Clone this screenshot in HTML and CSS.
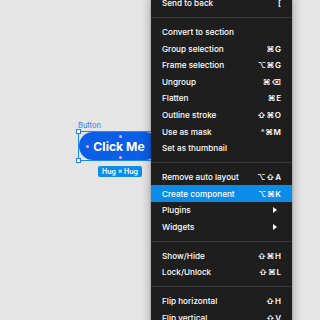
FILE: index.html
```html
<!DOCTYPE html>
<html>
<head>
<meta charset="utf-8">
<link rel="stylesheet" href="styles.css">
</head>
<body>
<div class="canvas">
  <div class="layer-label">Button</div>
  <div class="frame">
    <div class="pill">Click Me</div>
    <span class="handle h-tl"></span>
    <span class="handle h-bl"></span>
    <span class="dot d-left"></span>
    <span class="dot d-top"></span>
    <span class="dot d-bottom"></span>
  </div>
  <div class="badge">Hug × Hug</div>

  <div class="menu">
    <div class="item"><span>Send to back</span><span class="key">[</span></div>
    <div class="sep"></div>
    <div class="item"><span>Convert to section</span></div>
    <div class="item"><span>Group selection</span><span class="key">⌘G</span></div>
    <div class="item"><span>Frame selection</span><span class="key">⌥⌘G</span></div>
    <div class="item"><span>Ungroup</span><span class="key">⌘⌫</span></div>
    <div class="item"><span>Flatten</span><span class="key">⌘E</span></div>
    <div class="item"><span>Outline stroke</span><span class="key">⇧⌘O</span></div>
    <div class="item"><span>Use as mask</span><span class="key">^⌘M</span></div>
    <div class="item"><span>Set as thumbnail</span></div>
    <div class="sep"></div>
    <div class="item"><span>Remove auto layout</span><span class="key">⌥⇧A</span></div>
    <div class="item active"><span>Create component</span><span class="key">⌥⌘K</span></div>
    <div class="item"><span>Plugins</span><svg class="arrow" width="4" height="6" viewBox="0 0 4 6"><path d="M0 0L4 3L0 6Z" fill="#fff"/></svg></div>
    <div class="item"><span>Widgets</span><svg class="arrow" width="4" height="6" viewBox="0 0 4 6"><path d="M0 0L4 3L0 6Z" fill="#fff"/></svg></div>
    <div class="sep"></div>
    <div class="item"><span>Show/Hide</span><span class="key">⇧⌘H</span></div>
    <div class="item"><span>Lock/Unlock</span><span class="key">⇧⌘L</span></div>
    <div class="sep"></div>
    <div class="item"><span>Flip horizontal</span><span class="key">⇧H</span></div>
    <div class="item"><span>Flip vertical</span><span class="key">⇧V</span></div>
  </div>
</div>
</body>
</html>
```
FILE: styles.css
```css
html, body {
  margin: 0;
  padding: 0;
  width: 320px;
  height: 320px;
  overflow: hidden;
  background: #e5e5e5;
}
.canvas {
  position: relative;
  width: 320px;
  height: 320px;
  font-family: Inter, "Noto Sans", sans-serif;
}
.layer-label {
  position: absolute;
  left: 78px;
  top: 121px;
  font-size: 7.5px;
  line-height: 9px;
  color: #2f7de1;
}
.frame {
  position: absolute;
  left: 78px;
  top: 131px;
  width: 82px;
  height: 30px;
  box-sizing: border-box;
  border: 1px solid #1e88f0;
}
.pill {
  height: 28px;
  border-radius: 14px;
  background: #0b5ee6;
  color: #fff;
  font-weight: 700;
  font-size: 12.2px;
  display: flex;
  align-items: center;
  justify-content: center;
}
.handle {
  position: absolute;
  width: 5px;
  height: 5px;
  box-sizing: border-box;
  background: #fff;
  border: 1px solid #1e88f0;
}
.h-tl { left: -3px; top: -3px; }
.h-bl { left: -3px; bottom: -3px; }
.dot {
  position: absolute;
  width: 3px;
  height: 3px;
  border-radius: 50%;
  background: #f0a8f4;
}
.d-left { left: 7px; top: 13px; }
.d-top { left: 40px; top: 3px; }
.d-bottom { left: 40px; top: 24px; }
.badge {
  position: absolute;
  left: 98px;
  top: 166px;
  width: 44px;
  height: 11px;
  border-radius: 2px;
  background: #0d8de9;
  color: #fff;
  font-size: 7px;
  font-weight: 600;
  display: flex;
  align-items: center;
  justify-content: center;
}
.menu {
  position: absolute;
  left: 151px;
  top: -5.3px;
  width: 141px;
  background: #1e1e1e;
  box-shadow: 0 2px 10px rgba(0, 0, 0, 0.35), 0 0 1px rgba(0, 0, 0, 0.5);
  color: #fff;
  font-size: 8.2px;
  font-weight: 500;
}
.item {
  height: 16.6px;
  padding: 0 11px;
  display: flex;
  align-items: center;
  justify-content: space-between;
  white-space: nowrap;
}
.item.active {
  background: #0c8ce9;
}
.key {
  font-family: Inter, "DejaVu Sans", sans-serif;
  font-size: 8px;
  font-weight: 600;
  letter-spacing: 0.6px;
  margin-right: -0.6px;
}
.arrow {
  margin-right: 4px;
}
.sep {
  height: 1px;
  background: #383838;
  margin: 5.7px 0;
}
```
